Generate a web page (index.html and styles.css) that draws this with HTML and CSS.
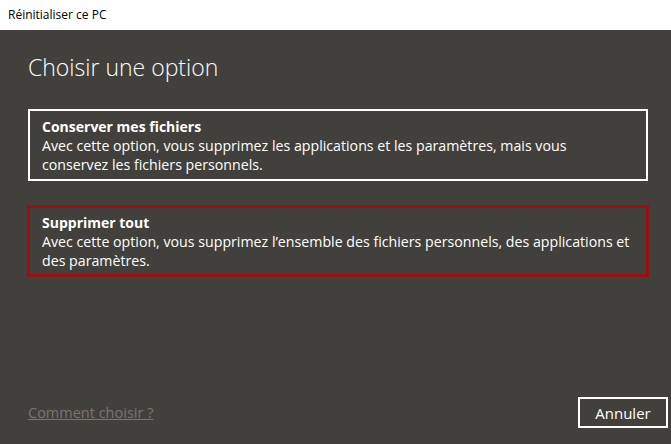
FILE: index.html
```html
<!DOCTYPE html>
<html lang="fr">
  <head>
    <meta charset="UTF-8" />
    <meta name="viewport" content="width=device-width, initial-scale=1.0" />
    <title>Réinitialiser ce PC</title>
    <link rel="stylesheet" href="styles.css">
  </head>
  <body>
    <div class="titlebar">Réinitialiser ce PC</div>
    <div class="main">
      <h1>Choisir une option</h1>
      <div class="option">
        <h3>Conserver mes fichiers</h3>
        <p>Avec cette option, vous supprimez les applications et les paramètres, mais vous conservez les fichiers personnels.</p>
      </div>
      <div class="option selected">
        <h3>Supprimer tout</h3>
        <p>Avec cette option, vous supprimez l’ensemble des fichiers personnels, des applications et des paramètres.</p>
      </div>
      <div class="footer">
        <a href="#" class="help">Comment choisir ?</a>
        <button class="cancel">Annuler</button>
      </div>
    </div>
  </body>
</html>
```

FILE: styles.css
```css
body {
  margin: 0;
  height: 444px;
  display: flex;
  flex-direction: column;
  font-family: "Open Sans", sans-serif;
  background-color: #42403c;
  color: #fff;
}

.titlebar {
  height: 30px;
  background-color: #fff;
  color: #000;
  font-size: 12px;
  line-height: 30px;
  padding-left: 8px;
}

.main {
  flex: 1;
  display: flex;
  flex-direction: column;
  padding: 0 3px 16px 28px;
}

h1 {
  font-weight: 300;
  font-size: 23px;
  line-height: 30px;
  margin: 22px 0 27px;
}

.option {
  width: 620px;
  border: 2px solid #fff;
  padding: 6px 15px 5px 12px;
  box-sizing: border-box;
  margin-bottom: 24px;
}

.option.selected {
  border: 3px solid #9b0e12;
  width: 622px;
  margin-left: -1px;
  padding: 5px 15px 4px 12px;
}

h3 {
  margin: 0;
  font-size: 14px;
  font-weight: bold;
  line-height: 19px;
}

p {
  margin: 0;
  font-size: 14.2px;
  line-height: 19px;
}

.footer {
  margin-top: auto;
  display: flex;
  justify-content: space-between;
  align-items: center;
}

.help {
  color: #77756f;
  font-size: 14.5px;
}

.cancel {
  width: 90px;
  height: 31px;
  background: transparent;
  border: 2px solid #fff;
  color: #fff;
  font-family: inherit;
  font-size: 15px;
  padding: 0;
}
```
